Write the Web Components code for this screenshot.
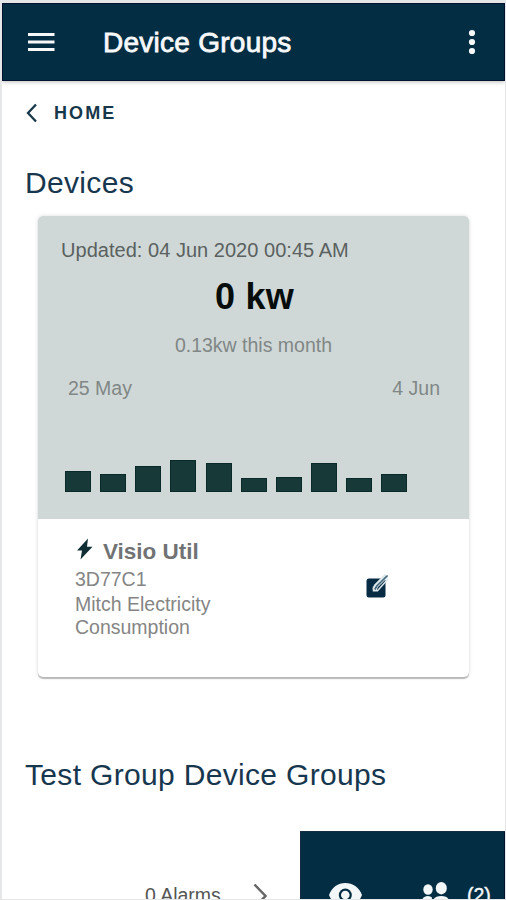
<!DOCTYPE html>
<html lang="en"><head><meta charset="utf-8"><title>Device Groups</title>
<style>
html,body{margin:0;height:100%;overflow:hidden}
body{font-family:"Liberation Sans",Arial,sans-serif;background:#fff}
</style></head><body>
<device-page></device-page>
<script>
function define(name, html) {
  const t = document.createElement('template');
  t.innerHTML = html;
  customElements.define(name, class extends HTMLElement {
    constructor() { super(); this.attachShadow({mode:'open'}).append(t.content.cloneNode(true)); }
  });
}

define('app-bar', `<style>
:host{display:flex;align-items:center;box-sizing:border-box;height:78px;padding:0 24px 0 26px;background:#022d42;box-shadow:inset 0 0 0 1px #03132f,0 1px 4px #0004;color:#f6f8fa}
svg{display:block;flex:none}
h1{flex:1;margin:1px 0 0 48px;font-size:28px;line-height:40px;font-weight:400;letter-spacing:.26px;-webkit-text-stroke:.8px currentColor}
</style>
<svg width="27" height="20" viewBox="0 0 27 20" fill="#f6f8fa"><path d="M0 1h26.500v3H0zM0 8.500h26.500v3H0zM0 16h26.500v3H0z"/></svg>
<h1><slot></slot></h1>
<svg width="18" height="28" viewBox="0 0 18 28" fill="#f6f8fa"><circle cx="9" cy="5" r="3.100"/><circle cx="9" cy="14" r="3.100"/><circle cx="9" cy="23" r="3.100"/></svg>`);

define('back-link', `<style>
:host{display:flex;align-items:center;height:40px;margin-top:12px;padding-left:24px;color:#17374a;font-size:18px;font-weight:700;letter-spacing:2.100px}
svg{margin-right:16px}
</style>
<svg width="12" height="20" viewBox="0 0 12 20" fill="none" stroke="#17374a" stroke-width="2.300"><path d="M10 1.500 2 10l8 8.500"/></svg><slot></slot>`);

define('section-title', `<style>
:host{display:block;padding-left:23px;font-size:30px;line-height:40px;letter-spacing:.33px;color:#17374f;white-space:nowrap}
</style><slot></slot>`);

customElements.define('bar-chart', class extends HTMLElement {
  connectedCallback() {
    const root = this.attachShadow({mode:'open'});
    const bars = this.getAttribute('values').split(',').map(v => `<i style="height:${v}px"></i>`).join('');
    root.innerHTML = `<style>
:host{display:flex;align-items:flex-end;gap:9.150px;height:40px}
i{width:26px;box-sizing:border-box;background:#173a39;border:1px solid #092a29}
</style>${bars}`;
  }
});

define('usage-panel', `<style>
:host{display:block;box-sizing:border-box;height:303px;padding-top:20px;background:#d0d8d7;color:#808786;font-size:19.500px}
.updated{padding-left:23px;font-size:20px;line-height:28px;color:#5a6160;letter-spacing:.03px}
.now{text-align:center;margin-top:11px;padding-left:2px;font-size:36px;font-weight:700;line-height:44px;color:#070c0d;letter-spacing:.2px}
.month{text-align:center;line-height:28px;margin-top:12px}
.range{display:flex;justify-content:space-between;padding:0 29px 0 30px;margin-top:15px;line-height:28px}
bar-chart{margin:50px 0 0 27px}
</style>
<div class="updated"><slot name="updated"></slot></div>
<div class="now"><slot name="now"></slot></div>
<div class="month"><slot name="month"></slot></div>
<div class="range"><slot name="from"></slot><slot name="to"></slot></div>
<bar-chart values="21,18,26,32,29,14,15,29,14,18"></bar-chart>`);

define('device-info', `<style>
:host{display:flex;box-sizing:border-box;height:158px;padding:18px 0 0 37px;color:#858585;font-size:19.500px;line-height:24px}
.text{width:290px}
.name{display:flex;align-items:center;height:29px;font-size:22.500px;font-weight:700;color:#707274}
.bolt{margin:-6px 8px 0 1px}
.code{line-height:27px}
.desc{line-height:23px;width:160px}
.edit{display:block;margin-top:37px}
</style>
<div class="text">
<div class="name"><svg class="bolt" width="19" height="22" viewBox="0 0 19 22"><path d="M12 .500 1 12.500h5L4.500 21.500 16.500 8.700H11z" fill="#102f34"/></svg><slot name="name"></slot></div>
<div class="code"><slot name="code"></slot></div>
<div class="desc"><slot name="desc"></slot></div>
</div>
<svg class="edit" width="26" height="26" viewBox="0 0 26 26"><rect x="1.500" y="4.500" width="19" height="19" rx="2.500" fill="#062b42"/><path d="M9.500 16 11 12 21.500 1.500" fill="none" stroke="#dce7ec" stroke-width="4.500"/><path d="M8.500 12.500v4.300h4L23 5" fill="none" stroke="#dce7ec" stroke-width="1.500"/><path d="M9.800 15.500 11.800 12 22.600 1.500" fill="none" stroke="#45677a" stroke-width="1.700"/></svg>`);

define('device-card', `<style>
:host{display:block;width:431px;margin:13px 0 0 36px;border-radius:5px;overflow:hidden;background:#fff;box-shadow:0 2px 1px #0000003d,0 0 4px #0002}
</style><slot></slot>`);

define('group-row', `<style>
:host{display:flex;height:80px;margin-top:36px;font-size:19.500px;color:#555;line-height:28px}
.alarms{display:flex;width:298px;box-sizing:border-box;padding:50px 0 0 143px;white-space:nowrap}
.alarms svg{margin:1px 0 0 31px}
.actions{display:flex;flex:1;background:#022d42;box-shadow:inset 1px 1px 0 #172b45,inset -1px 0 0 #03132f;color:#f4f7f8;box-sizing:border-box;padding:50px 0 0 28px;-webkit-text-stroke:.4px currentColor}
svg{display:block;flex:none}
.people{margin-left:57px}
.count{margin-left:18px}
</style>
<div class="alarms"><slot name="alarms"></slot><svg width="18" height="28" viewBox="0 0 18 28" fill="none" stroke="#666" stroke-width="2.500"><path d="m2.500 2.500 11 11.500-11 11.500"/></svg></div>
<div class="actions">
<svg width="36" height="28" viewBox="0 0 36 28"><path d="M1 14C4 6 10 2 17.300 2S31 6 34 14c-3 8-9.500 12-16.700 12S4 22 1 14z" fill="#f4f7f8"/><circle cx="17.300" cy="14" r="6.500" fill="#022d42"/><circle cx="17.300" cy="14" r="4.300" fill="#f4f7f8"/></svg>
<svg class="people" width="28" height="28" viewBox="0 0 28 28" fill="#f4f7f8"><ellipse cx="7" cy="8.500" rx="4.700" ry="5.300"/><ellipse cx="20.300" cy="7.200" rx="5.500" ry="6.200"/><path d="M1 24v-5q1-3.500 6-4 2.500 0 4 1.500L10 24zM12 24v-5q2-4 8.300-4t7.700 4v5z"/></svg>
<span class="count"><slot name="count"></slot></span>
</div>`);

define('device-page', `<style>
:host{display:flow-root;box-sizing:border-box;width:506px;height:900px;overflow:hidden;border:solid #e5e6e7;border-width:3px 1px 1px 2px;background:#fff}
.devices{margin-top:30px}
.groups{margin-top:78px}
</style>
<app-bar>Device Groups</app-bar>
<back-link>HOME</back-link>
<section-title class="devices">Devices</section-title>
<device-card>
<usage-panel><span slot="updated">Updated: 04 Jun 2020 00:45 AM</span><span slot="now">0 kw</span><span slot="month">0.13kw this month</span><span slot="from">25 May</span><span slot="to">4 Jun</span></usage-panel>
<device-info><span slot="name">Visio Util</span><span slot="code">3D77C1</span><span slot="desc">Mitch Electricity Consumption</span></device-info>
</device-card>
<section-title class="groups">Test Group Device Groups</section-title>
<group-row><span slot="alarms">0 Alarms</span><span slot="count">(2)</span></group-row>`);
</script>
</body></html>
